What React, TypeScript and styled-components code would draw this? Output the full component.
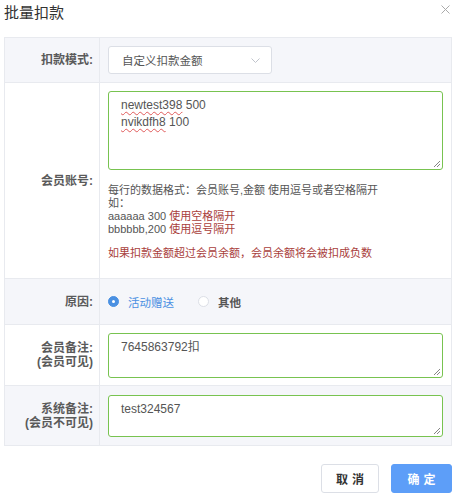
import React from "react";
import styled, { createGlobalStyle } from "styled-components";

const Global = createGlobalStyle`
  html, body { margin: 0; padding: 0; background: #fff; }
  body { font-family: "Liberation Sans", "Noto Sans CJK SC", sans-serif; color: #555; }
  * { box-sizing: border-box; }
`;

const Dialog = styled.div`
  width: 457px;
  padding: 0 5px 0 4px;
`;

const Header = styled.div`
  height: 37px;
  display: flex;
  justify-content: space-between;
  align-items: flex-start;
`;

const Title = styled.div`
  font-size: 15px;
  line-height: 18px;
  padding-top: 4px;
  color: #333;
`;

const Close = styled.div`
  width: 12px;
  height: 12px;
  margin-top: 3px;
  margin-right: 1px;
  display: flex;
  align-items: center;
  justify-content: center;
`;

const Table = styled.div`
  display: grid;
  grid-template-columns: 95px 1fr;
  border-top: 1px solid #e8eaef;
  border-left: 1px solid #e8eaef;
`;

const Label = styled.div<{ $striped?: boolean }>`
  background: ${(p) => (p.$striped ? "#f5f6fa" : "#fff")};
  border-right: 1px solid #e8eaef;
  border-bottom: 1px solid #e8eaef;
  display: flex;
  flex-direction: column;
  justify-content: center;
  align-items: flex-end;
  padding-right: 6px;
  font-size: 12px;
  line-height: 14px;
  font-weight: 600;
  color: #5a5a5a;
  text-align: right;
`;

const Cell = styled.div<{ $striped?: boolean; $pad: string }>`
  background: ${(p) => (p.$striped ? "#f5f6fa" : "#fff")};
  border-right: 1px solid #e8eaef;
  border-bottom: 1px solid #e8eaef;
  padding: ${(p) => p.$pad};
  display: flex;
  flex-direction: column;
`;

const Select = styled.div`
  width: 164px;
  height: 28px;
  border: 1px solid #dcdfe6;
  border-radius: 3px;
  background: #fff;
  display: flex;
  align-items: center;
  justify-content: space-between;
  padding: 0 11px 0 13px;
  font-size: 11.5px;
  color: #555;
`;

const TextBox = styled.div<{ $h: number }>`
  position: relative;
  height: ${(p) => p.$h}px;
  border: 1px solid #78c350;
  border-radius: 3px;
  background: #fff;
  padding: 5px 12px;
  font-size: 12px;
  line-height: 17px;
  color: #555;
`;

const Grip = styled.svg`
  position: absolute;
  right: 1px;
  bottom: 1px;
`;

const Squiggle = styled.span`
  text-decoration: underline wavy #e05a5a;
  text-decoration-thickness: 1px;
  text-underline-offset: 2px;
`;

const Help = styled.div`
  margin-top: 14px;
  font-size: 11px;
  line-height: 13px;
  color: #555;
`;

const Red = styled.span`
  color: #a9403c;
`;

const Warn = styled.div`
  margin-top: 11px;
  font-size: 11px;
  line-height: 13px;
  color: #a9403c;
`;

const Radios = styled.div`
  display: flex;
  align-items: center;
  height: 100%;
  gap: 24px;
`;

const RadioItem = styled.div<{ $on?: boolean }>`
  display: flex;
  align-items: center;
  gap: 9px;
  font-size: 11.5px;
  color: ${(p) => (p.$on ? "#4a90e2" : "#555")};
  font-weight: ${(p) => (p.$on ? "normal" : "600")};
`;

const Dot = styled.span<{ $on?: boolean }>`
  width: 11px;
  height: 11px;
  border-radius: 50%;
  background: ${(p) => (p.$on ? "#4a90e2" : "#fff")};
  border: 1px solid ${(p) => (p.$on ? "#4a90e2" : "#dcdfe6")};
  display: flex;
  align-items: center;
  justify-content: center;
  &::after {
    content: "";
    width: 3px;
    height: 3px;
    border-radius: 50%;
    background: #fff;
    display: ${(p) => (p.$on ? "block" : "none")};
  }
`;

const Footer = styled.div`
  display: flex;
  justify-content: flex-end;
  gap: 12px;
  padding-top: 18px;
`;

const Button = styled.div<{ $primary?: boolean }>`
  height: 29px;
  width: ${(p) => (p.$primary ? "61px" : "58px")};
  border-radius: 3px;
  border: 1px solid ${(p) => (p.$primary ? "#5d9ef8" : "#dcdfe6")};
  background: ${(p) => (p.$primary ? "#5d9ef8" : "#fff")};
  color: ${(p) => (p.$primary ? "#fff" : "#333")};
  font-size: 12px;
  font-weight: bold;
  letter-spacing: 4px;
  padding-left: 4px;
  display: flex;
  align-items: center;
  justify-content: center;
`;

const GripIcon = () => (
  <Grip width="8" height="8" viewBox="0 0 8 8">
    <path d="M1 7 L7 1 M4 7 L7 4" stroke="#777" strokeWidth="0.9" />
  </Grip>
);

export default function App() {
  return (
    <Dialog>
      <Global />
      <Header>
        <Title>批量扣款</Title>
        <Close>
          <svg width="9" height="9" viewBox="0 0 9 9">
            <path d="M0.5 0.5 L8.5 8.5 M8.5 0.5 L0.5 8.5" stroke="#aaa" strokeWidth="1" />
          </svg>
        </Close>
      </Header>
      <Table>
        <Label $striped>扣款模式:</Label>
        <Cell $striped $pad="8px 8px 8px 8px">
          <Select>
            <span>自定义扣款金额</span>
            <svg width="9" height="5" viewBox="0 0 9 5">
              <path d="M0.5 0.5 L4.5 4.5 L8.5 0.5" stroke="#c0c4cc" strokeWidth="1" fill="none" />
            </svg>
          </Select>
        </Cell>

        <Label>会员账号:</Label>
        <Cell $pad="8px 8px 18px 8px">
          <TextBox $h={79}>
            <div>
              <Squiggle>newtest398</Squiggle> 500
            </div>
            <div>
              <Squiggle>nvikdfh8</Squiggle> 100
            </div>
            <GripIcon />
          </TextBox>
          <Help>
            <div>每行的数据格式：会员账号,金额 使用逗号或者空格隔开</div>
            <div>如：</div>
            <div>
              aaaaaa 300 <Red>使用空格隔开</Red>
            </div>
            <div>
              bbbbbb,200 <Red>使用逗号隔开</Red>
            </div>
          </Help>
          <Warn>如果扣款金额超过会员余额，会员余额将会被扣成负数</Warn>
        </Cell>

        <Label $striped>原因:</Label>
        <Cell $striped $pad="0 8px" style={{ height: 46 }}>
          <Radios>
            <RadioItem $on>
              <Dot $on />
              活动赠送
            </RadioItem>
            <RadioItem>
              <Dot />
              其他
            </RadioItem>
          </Radios>
        </Cell>

        <Label>
          <div>会员备注:</div>
          <div>(会员可见)</div>
        </Label>
        <Cell $pad="8px 8px 7px 8px">
          <TextBox $h={45}>
            <div>7645863792扣</div>
            <GripIcon />
          </TextBox>
        </Cell>

        <Label $striped>
          <div>系统备注:</div>
          <div>(会员不可见)</div>
        </Label>
        <Cell $striped $pad="9px 8px 8px 8px">
          <TextBox $h={42}>
            <div>test324567</div>
            <GripIcon />
          </TextBox>
        </Cell>
      </Table>
      <Footer>
        <Button>取消</Button>
        <Button $primary>确定</Button>
      </Footer>
    </Dialog>
  );
}
